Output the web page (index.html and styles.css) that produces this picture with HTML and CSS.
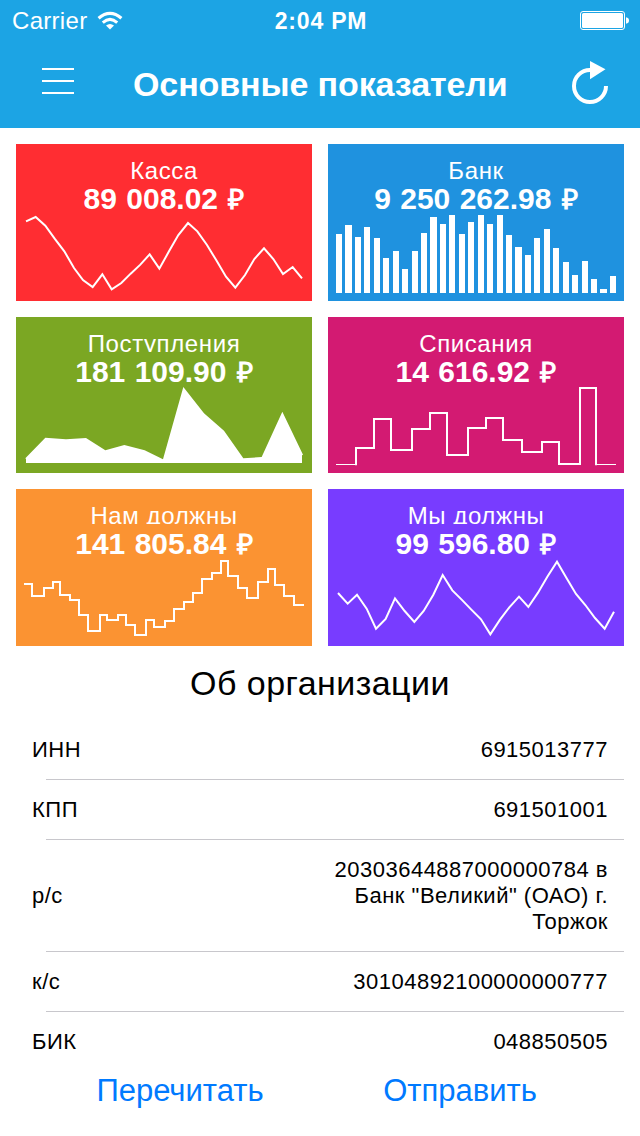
FILE: index.html
```html
<!DOCTYPE html>
<html lang="ru">
<head>
    <meta charset="UTF-8">
    <meta name="viewport" content="width=device-width, initial-scale=1.0">
    <title>Основные показатели</title>
    <link rel="stylesheet" href="styles.css">
</head>
<body>
    <header class="header">
        <div class="status-bar">
            <div class="carrier">
                <span class="carrier-name">Carrier</span>
                <svg class="wifi" width="26" height="20" viewBox="0 0 26 20">
                    <path d="M1.6 7.2Q13-2.6 24.4 7.2" fill="none" stroke="#fff" stroke-width="3.2"/>
                    <path d="M5.8 11.6Q13 5.2 20.2 11.6" fill="none" stroke="#fff" stroke-width="3"/>
                    <path d="M9 14.6Q13 11.2 17 14.6L13 18.6z" fill="#fff"/>
                </svg>
            </div>
            <span class="time">2:04 PM</span>
            <svg class="battery" width="50" height="20" viewBox="0 0 50 20">
                <rect x=".5" y=".5" width="44" height="18" rx="2.5" fill="none" stroke="#fff"/>
                <rect x="2" y="2" width="41" height="15" rx="1.5" fill="#fff"/>
                <path d="M46 6.2q3 .6 3 3.3t-3 3.3z" fill="#fff"/>
            </svg>
        </div>
        <div class="nav-bar">
            <button class="menu-button" aria-label="Меню">
                <svg width="32" height="26" viewBox="0 0 32 26">
                    <path d="M0 1h32M0 13h32M0 25h32" stroke="#fff" stroke-width="2"/>
                </svg>
            </button>
            <h1 class="title">Основные показатели</h1>
            <button class="refresh-button" aria-label="Обновить">
                <svg width="38" height="44" viewBox="0 0 38 44">
                    <path d="M18 9A16 16 0 1 0 34 25" fill="none" stroke="#fff" stroke-width="4"/>
                    <path d="M18 0L33.5 8.3L18 18.3z" fill="#fff"/>
                </svg>
            </button>
        </div>
    </header>

    <main>
        <div class="cards">
            <div class="card red">
                <div class="card-label">Касса</div>
                <div class="card-amount">89 008.02 <span class="currency">₽</span></div>
                <svg class="chart" viewBox="18 216 888 264">
                    <polyline points="48,244 77,231 106,257 134,296 163,334 192,384 219,420 248,441 277,403 305,448 334,429 362,401 391,374 419,343 448,386 477,334 505,285 534,249 562,274 591,315 619,361 648,410 676,443 705,405 733,357 762,325 790,357 819,402 848,381 876,415"/>
                </svg>
            </div>
            <div class="card blue">
                <div class="card-label">Банк</div>
                <div class="card-amount">9 250 262.98 <span class="currency">₽</span></div>
                <svg class="chart" viewBox="18 216 888 264">
                    <path class="filled" d="M42 459V282h18V459zM69 459V255h21V459zM99 459V291h18V459zM126 459V261h18V459zM156 459V294h18V459zM183 459V354h18V459zM213 459V333h18V459zM240 459V387h18V459zM270 459V333h18V459zM297 459V279h18V459zM324 459V231h21V459zM354 459V252h18V459zM381 459V225h18V459zM411 459V282h18V459zM438 459V246h18V459zM468 459V225h18V459zM495 459V252h18V459zM525 459V225h18V459zM552 459V285h18V459zM579 459V321h21V459zM609 459V345h18V459zM636 459V294h18V459zM666 459V267h18V459zM693 459V324h18V459zM723 459V366h18V459zM750 459V405h18V459zM780 459V363h18V459zM807 459V417h18V459zM834 459V447h21V459zM864 459V408h18V459z"/>
                </svg>
            </div>
            <div class="card green">
                <div class="card-label">Поступления</div>
                <div class="card-amount">181 109.90 <span class="currency">₽</span></div>
                <svg class="chart" viewBox="18 216 888 264">
                    <path class="filled" d="M48 450V438L46 436L106 374L168 379L228 375L286 412L343 396L404 412L459 439L520 222L582 301L642 353L700 436L755 432L817 296L879 425L876 427V450z"/>
                </svg>
            </div>
            <div class="card pink">
                <div class="card-label">Списания</div>
                <div class="card-amount">14 616.92 <span class="currency">₽</span></div>
                <svg class="chart" viewBox="18 216 888 264">
                    <path d="M99 454H102V405H156V318H207V411H270V348H324V300H375V426H438V345H492V315H543V381H600V417H660V387H711V453H774V225H822V454H825"/>
                    <path class="filled" d="M42 453h60v3H42zM822 453h60v3h-60z"/>
                </svg>
            </div>
            <div class="card orange">
                <div class="card-label">Нам должны</div>
                <div class="card-amount">141 805.84 <span class="currency">₽</span></div>
                <svg class="chart" viewBox="18 216 888 264">
                    <path d="M42 297H66V333H102V309H129V291H150V330H180V345H207V390H234V438H270V390H291V405H324V390H348V420H375V450H408V405H432V426H465V408H492V372H522V351H549V324H576V282H606V264H633V228H654V273H684V309H711V339H744V291H774V252H795V300H822V333H852V360H882"/>
                </svg>
            </div>
            <div class="card violet">
                <div class="card-label">Мы должны</div>
                <div class="card-amount">99 596.80 <span class="currency">₽</span></div>
                <svg class="chart" viewBox="18 216 888 264">
                    <polyline points="48,324 77,356 105,329 134,371 162,431 191,402 219,340 248,378 277,411 305,378 334,329 362,270 391,316 419,344 448,374 477,403 505,448 534,404 562,367 591,335 619,366 648,323 676,275 705,230 733,278 762,327 790,360 819,399 848,431 876,380"/>
                </svg>
            </div>
        </div>

        <h2 class="section-title">Об организации</h2>
        <ul class="details">
            <li><span class="name">ИНН</span><span class="value">6915013777</span></li>
            <li><span class="name">КПП</span><span class="value">691501001</span></li>
            <li><span class="name">р/с</span><span class="value">20303644887000000784 в Банк "Великий" (ОАО) г. Торжок</span></li>
            <li><span class="name">к/с</span><span class="value">30104892100000000777</span></li>
            <li><span class="name">БИК</span><span class="value">048850505</span></li>
        </ul>
    </main>

    <footer class="actions">
        <button class="action">Перечитать</button>
        <button class="action">Отправить</button>
    </footer>
</body>
</html>
```
FILE: styles.css
```css
* {
    box-sizing: border-box;
}

body, h1, h2, ul {
    margin: 0;
    padding: 0;
}

body {
    width: 640px;
    height: 1136px;
    overflow: hidden;
    font-family: "Liberation Sans", Arial, sans-serif;
    background-color: #fff;
    color: #000;
}

button {
    padding: 0;
    border: none;
    background: none;
    font-family: inherit;
    cursor: pointer;
}

svg {
    display: block;
}

/* Header */
.header {
    height: 128px;
    background-color: #1ca4e4;
    color: #fff;
}

.status-bar {
    display: grid;
    grid-template-columns: 1fr auto 1fr;
    align-items: center;
    height: 40px;
    padding: 2px 10px 0 12px;
    font-size: 24px;
}

.carrier {
    display: flex;
    align-items: center;
    gap: 10px;
}

.carrier-name {
    letter-spacing: 0.3px;
}

.time {
    font-size: 23px;
    font-weight: bold;
    letter-spacing: 0.8px;
}

.battery {
    justify-self: end;
}

.nav-bar {
    display: flex;
    align-items: center;
    height: 88px;
    padding: 0 30px 0 42px;
}

.menu-button {
    padding-bottom: 6px;
}

.title {
    margin-left: 59px;
    font-size: 34px;
    line-height: 40px;
    font-weight: bold;
    letter-spacing: -0.1px;
    white-space: nowrap;
}

.refresh-button {
    margin-left: auto;
    padding-bottom: 2px;
}

/* Cards */
.cards {
    display: grid;
    grid-template-columns: 296px 296px;
    grid-template-rows: 157px 156px 157px;
    gap: 16px;
    padding: 16px 16px 0;
}

.card {
    padding-top: 13px;
    color: #fff;
    text-align: center;
    overflow: hidden;
}

.card-label {
    height: 22px;
    overflow: hidden;
    font-size: 24px;
    line-height: 27px;
    letter-spacing: 0.6px;
}

.card-amount {
    height: 33px;
    font-size: 30px;
    line-height: 40px;
    font-weight: bold;
    word-spacing: 1px;
    white-space: nowrap;
}

.card-amount .currency {
    font-size: 28px;
    margin-left: 1px;
}

.chart {
    width: 296px;
    height: 88px;
    fill: none;
    stroke: #fff;
    stroke-width: 6;
}

.chart .filled {
    fill: #fff;
    stroke: none;
}

.red { background-color: #ff2d32; }
.blue { background-color: #1f92df; }
.green { background-color: #7ba723; }
.pink { background-color: #d31a72; }
.orange { background-color: #fb9332; }
.violet { background-color: #783cff; }

/* Organization details */
.section-title {
    height: 74px;
    font-size: 34px;
    line-height: 74px;
    font-weight: normal;
    letter-spacing: 0.45px;
    text-align: center;
}

.details {
    list-style: none;
    font-size: 22px;
    line-height: 26px;
    letter-spacing: 0.5px;
}

.details li {
    display: flex;
    justify-content: space-between;
    align-items: center;
    margin: 0 16px 0 46px;
    padding: 17px 16px 16px 0;
    border-bottom: 1px solid #c8c7cc;
}

.details li:last-child {
    border-bottom: none;
    padding-bottom: 9px;
}

.details .name {
    margin-left: -14px;
}

.details .value {
    max-width: 280px;
    text-align: right;
}

/* Bottom buttons */
.actions {
    display: grid;
    grid-template-columns: 280px 280px;
    justify-content: center;
    padding-top: 5px;
}

.action {
    height: 44px;
    font-size: 31px;
    line-height: 40px;
    color: #007aff;
}
```
